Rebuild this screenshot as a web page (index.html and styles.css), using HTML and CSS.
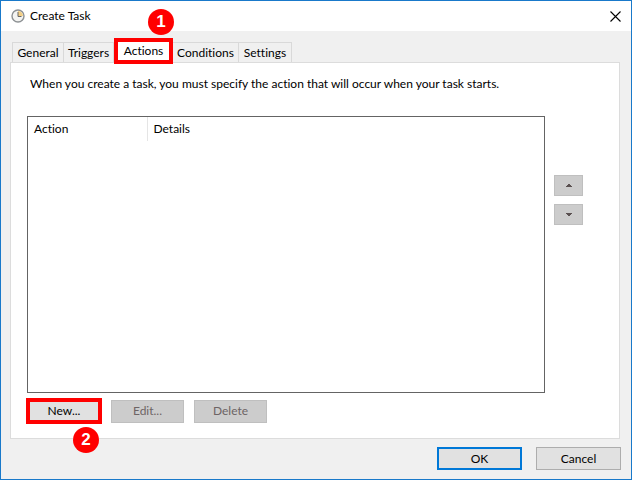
FILE: index.html
```
<!DOCTYPE html>
<html lang="en">
<head>
    <meta charset="UTF-8">
    <meta name="viewport" content="width=device-width, initial-scale=1.0">
    <title>Create Task</title>
    <link rel="stylesheet" href="styles.css">
</head>

<body>
    <div class="window">
        <header class="titlebar">
            <svg class="clock" viewBox="0 0 14 14" aria-hidden="true">
                <circle cx="7" cy="7" r="6" fill="#f4f4f2" stroke="#8d9194" stroke-width="1.4"/>
                <path d="M7 7V2a5 5 0 0 1 5 5z" fill="#f3cf86"/>
                <path d="M7 3v4.5h3.5" fill="none" stroke="#666" stroke-width="1"/>
            </svg>
            <h1>Create Task</h1>
            <button type="button" class="close" aria-label="Close">
                <svg viewBox="0 0 11 11" aria-hidden="true"><path d="M.5 .5l10 10M10.5 .5l-10 10" stroke="#000" stroke-width="1.1"/></svg>
            </button>
        </header>

        <main class="main">
            <div class="tabs">
                <button type="button" class="tab">General</button>
                <button type="button" class="tab">Triggers</button>
                <div class="step">
                    <button type="button" class="tab active marked">Actions</button>
                    <span class="badge badge-top">1</span>
                </div>
                <button type="button" class="tab">Conditions</button>
                <button type="button" class="tab">Settings</button>
            </div>

            <section class="panel">
                <p>When you create a task, you must specify the action that will occur when your task starts.</p>
                <div class="content">
                    <div class="list">
                        <table>
                            <thead>
                                <tr><th class="col-action">Action</th><th>Details</th></tr>
                            </thead>
                        </table>
                    </div>
                    <div class="order">
                        <button type="button" class="btn move" aria-label="Move up" disabled>
                            <svg viewBox="0 0 6 3" aria-hidden="true"><path d="M0 3V2h1V1h1V0h2v1h1v1h1v1z" fill="#5a5050"/></svg>
                        </button>
                        <button type="button" class="btn move" aria-label="Move down" disabled>
                            <svg viewBox="0 0 6 3" aria-hidden="true"><path d="M0 0v1h1v1h1v1h2V2h1V1h1V0z" fill="#5a5050"/></svg>
                        </button>
                    </div>
                </div>
                <div class="actions">
                    <div class="step">
                        <button type="button" class="btn new marked">New...</button>
                        <span class="badge badge-bottom">2</span>
                    </div>
                    <button type="button" class="btn" disabled>Edit...</button>
                    <button type="button" class="btn" disabled>Delete</button>
                </div>
            </section>
        </main>

        <footer class="footer">
            <button type="button" class="btn wide ok">OK</button>
            <button type="button" class="btn wide">Cancel</button>
        </footer>
    </div>
</body>
</html>
```
FILE: styles.css
```
* {
    box-sizing: border-box;
}
body {
    margin: 0;
    font-family: "Segoe UI", Lato, "Open Sans", sans-serif;
    font-size: 12px;
    line-height: 16px;
    font-variant-ligatures: none;
    color: #000;
}
button {
    font: inherit;
    font-variant-ligatures: none;
    color: inherit;
    padding: 0;
}
.window {
    display: flex;
    flex-direction: column;
    min-height: 100vh;
    border: 1px solid #1979ca;
    background-color: #f0f0f0;
}

/* title bar */
.titlebar {
    display: flex;
    align-items: center;
    height: 30px;
    padding: 0 10px;
    background-color: #fff;
}
.clock {
    width: 14px;
    height: 14px;
    margin-right: 5px;
}
h1 {
    flex: 1;
    margin: 0;
    font-size: 12px;
    font-weight: normal;
}
.close {
    display: flex;
    border: 0;
    background: none;
}
.close svg {
    width: 11px;
    height: 11px;
}

/* tabs */
.main {
    flex: 1;
    display: flex;
    flex-direction: column;
    padding: 7px 11px 0 9px;
}
.tabs {
    display: grid;
    grid-template-columns: 52px 50px 59px 66px 53px;
    align-items: end;
    height: 24px;
    padding-left: 2px;
}
.tab {
    height: 20px;
    border: 1px solid #d9d9d9;
    border-width: 1px 1px 0 0;
    background-color: #f0f0f0;
    white-space: nowrap;
}
.tab:first-child {
    border-left-width: 1px;
}
.tab.active {
    width: 100%;
    height: 26px;
    background-color: #fff;
}
.step {
    position: relative;
    display: flex;
}
.tabs .step {
    height: 24px;
}
.marked.marked {
    border: 4px solid #f00;
}
.badge {
    position: absolute;
    width: 26px;
    height: 26px;
    border-radius: 50%;
    background-color: #f00;
    color: #fff;
    font: bold 17px/26px "Liberation Sans", Arial, sans-serif;
    text-align: center;
}
.badge-top {
    right: -1px;
    bottom: 27px;
}
.badge-bottom {
    right: 3px;
    top: 29px;
}

/* panel */
.panel {
    flex: 1;
    display: flex;
    flex-direction: column;
    padding: 13px 36px 14px 16px;
    border: 1px solid #dcdcdc;
    background-color: #fff;
}
.panel p {
    margin: 0 0 24px 3px;
}
.content {
    flex: 1;
    display: flex;
    gap: 9px;
}
.list {
    flex: 1;
    border: 1px solid #646464;
}
table {
    width: 100%;
    border-collapse: collapse;
}
th {
    height: 24px;
    padding: 0 6px;
    font-weight: normal;
    text-align: left;
}
.col-action {
    width: 119px;
    border-right: 1px solid #e5e5e5;
}
.order {
    display: flex;
    flex-direction: column;
    gap: 8px;
    padding-top: 59px;
}
.actions {
    display: flex;
    align-items: center;
    gap: 10px;
    margin-top: 5px;
}
.actions .step {
    margin: 0 -1px;
}

/* buttons */
.btn {
    width: 73px;
    height: 23px;
    border: 1px solid #adadad;
    background-color: #e1e1e1;
}
.btn:disabled {
    border-color: #bfbfbf;
    background-color: #ccc;
    color: #6d6464;
}
.btn.new {
    width: 76px;
    height: 26px;
}
.btn.move {
    display: flex;
    align-items: center;
    justify-content: center;
    width: 29px;
    height: 21px;
}
.move svg {
    width: 6px;
    height: 3px;
}
.footer {
    display: flex;
    justify-content: flex-end;
    gap: 14px;
    padding: 8px 10px 9px;
}
.btn.wide {
    width: 85px;
}
.btn.ok {
    border: 2px solid #0078d7;
}
```
